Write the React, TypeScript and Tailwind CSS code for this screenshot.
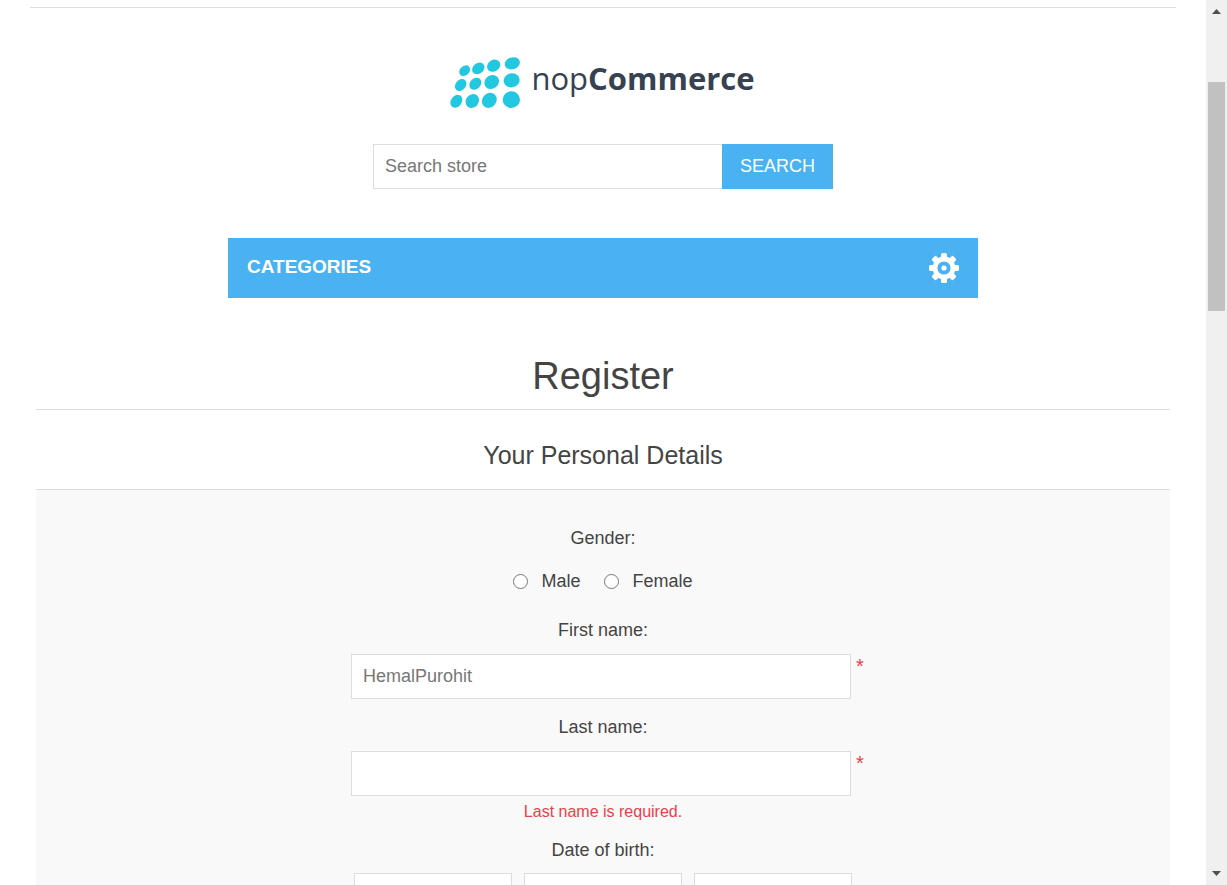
import { useState } from "react";

const dots = [
  [59, 56, 18, 14, -42], [100, 49, 20, 16, -38], [146, 41, 21, 17, -32], [202, 34, 23, 18, -18],
  [47, 99, 20, 15, -50], [91, 95, 20, 16, -45], [140, 90, 23, 20, -38], [200, 85, 24, 21, -15],
  [34, 148, 21, 16, -55], [82, 147, 22, 19, -52], [133, 145, 24, 21, -48], [199, 143, 26, 25, 0],
];

function LogoMark() {
  return (
    <svg viewBox="0 0 255 180" className="h-[60px] w-[85px]" fill="#22c8e0" aria-hidden="true">
      {dots.map(([x, y, rx, ry, angle]) => (
        <ellipse key={`${x}-${y}`} cx={x} cy={y} rx={rx} ry={ry} transform={`rotate(${angle} ${x} ${y})`} />
      ))}
    </svg>
  );
}

function GearIcon() {
  return (
    <svg viewBox="-15 -15 30 30" className="size-[30px]" aria-hidden="true">
      {[0, 45, 90, 135].map((a) => (
        <rect key={a} x="-3" y="-15" width="6" height="30" rx="1.6" fill="#fff" transform={`rotate(${a})`} />
      ))}
      <circle r="11.4" fill="#fff" />
      <circle r="6.6" fill="#4ab2f1" />
      <circle r="2.6" fill="#fff" />
    </svg>
  );
}

type FieldProps = { id: string; label: string; placeholder?: string; error?: string };

function TextField({ id, label, placeholder, error }: FieldProps) {
  return (
    <div className="flex flex-col items-center">
      <label htmlFor={id} className="mb-3 leading-6">{label}</label>
      <div className="flex w-full max-w-[522px] gap-[5px] pl-[9px]">
        <input
          id={id}
          type="text"
          required
          placeholder={placeholder}
          className="h-[45px] min-w-0 flex-1 border border-[#ddd] bg-white px-[11px] placeholder:text-[#777] focus:outline-none"
        />
        <span className="w-2 text-[20px] leading-6 text-[#e4434b]" aria-hidden="true">*</span>
      </div>
      {error && <p className="mt-1 text-[16px] leading-6 text-[#e4434b]">{error}</p>}
    </div>
  );
}

function ScrollRail() {
  return (
    <div className="flex w-[21px] shrink-0 flex-col items-center bg-[#f0f0f0]" aria-hidden="true">
      <svg viewBox="0 0 9 5" className="mt-[9px] h-[5px] w-[9px]" fill="#505050"><path d="M4.5 0 9 5H0z" /></svg>
      <div className="mt-[68px] h-[229px] w-[17px] bg-[#c1c1c1]" />
      <svg viewBox="0 0 9 5" className="mt-auto mb-[9px] h-[5px] w-[9px]" fill="#505050"><path d="M0 0h9L4.5 5z" /></svg>
    </div>
  );
}

export default function App() {
  const [gender, setGender] = useState("");
  return (
    <div className="flex h-screen overflow-hidden bg-white font-['Liberation_Sans',Arial,sans-serif] text-[18px] text-[#444]">
      <div className="min-w-0 flex-1 overflow-hidden pt-[7px]">
        <header className="mx-[30px] flex flex-col items-center border-t border-[#ddd] pt-11">
          <a href="#" aria-label="nopCommerce" className="flex h-[60px] items-center gap-px pr-1.5 text-[#364152]">
            <LogoMark />
            <span className="pb-2 font-['Open_Sans',sans-serif] text-[31px] leading-[46px]">
              nop<b className="font-bold">Commerce</b>
            </span>
          </a>
          <form className="mt-8 flex w-full max-w-[460px]" onSubmit={(e) => e.preventDefault()}>
            <input
              type="text"
              aria-label="Search store"
              placeholder="Search store"
              className="h-[45px] min-w-0 flex-1 border border-r-0 border-[#ddd] px-[11px] placeholder:text-[#777] focus:outline-none"
            />
            <button type="submit" className="h-[45px] w-[111px] bg-[#4ab2f1] text-white">SEARCH</button>
          </form>
          <button type="button" className="mt-[49px] flex h-[60px] w-full max-w-[750px] items-center justify-between bg-[#4ab2f1] px-[19px] text-[19px] font-bold text-white">
            <span className="pb-0.5">CATEGORIES</span>
            <GearIcon />
          </button>
        </header>

        <main className="mx-9 mt-[53px] text-center">
          <h1 className="border-b border-[#ddd] pb-[7px] text-[38px] leading-[51px]">Register</h1>
          <h2 className="pt-[25px] pb-3.5 text-[25px] leading-10">Your Personal Details</h2>
          <form className="flex flex-col border-t border-[#ddd] bg-[#f9f9f9] pt-9 pb-12">
            <fieldset>
              <legend className="mx-auto leading-6">Gender:</legend>
              <div className="mt-[19px] flex justify-center gap-6">
                {["Male", "Female"].map((g) => (
                  <label key={g} className="flex items-center gap-[13px] leading-6">
                    <input
                      type="radio"
                      name="gender"
                      checked={gender === g}
                      onChange={() => setGender(g)}
                      className="size-[15px]"
                    />
                    {g}
                  </label>
                ))}
              </div>
            </fieldset>
            <div className="mt-[25px] flex flex-col gap-4">
              <TextField id="first-name" label="First name:" placeholder="HemalPurohit" />
              <TextField id="last-name" label="Last name:" error="Last name is required." />
            </div>
            <fieldset className="mt-3.5">
              <legend className="mx-auto leading-6">Date of birth:</legend>
              <div className="mx-auto mt-[11px] grid max-w-[498px] grid-cols-3 gap-3">
                {["Day", "Month", "Year"].map((part) => (
                  <select key={part} aria-label={part} className="h-[45px] appearance-none border border-[#ddd] bg-white px-2">
                    <option value="" />
                  </select>
                ))}
              </div>
            </fieldset>
          </form>
        </main>
      </div>
      <ScrollRail />
    </div>
  );
}
